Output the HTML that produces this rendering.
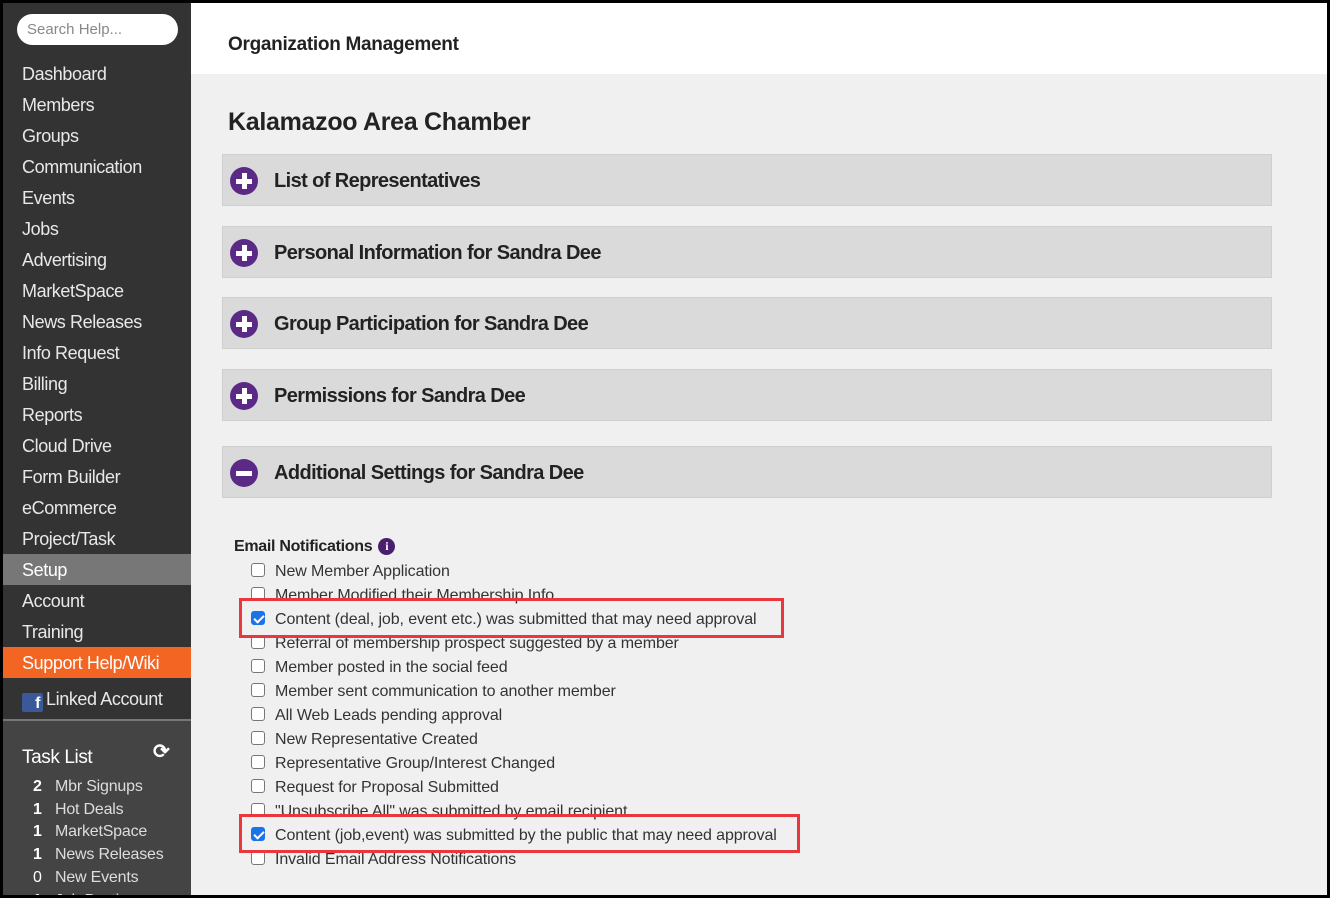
<!DOCTYPE html>
<html><head><meta charset="utf-8"><style>
*{margin:0;padding:0;box-sizing:border-box}
body{width:1330px;height:898px;background:#000;font-family:"Liberation Sans",Arial,sans-serif;position:relative;overflow:hidden}
#frame{position:absolute;left:3px;top:3px;width:1324px;height:892px;background:#f0f0f0;overflow:hidden}
#side{position:absolute;left:0;top:0;width:188px;height:892px;background:#333}
#search{position:absolute;left:14px;top:11px;width:161px;height:31px;background:#fff;border-radius:16px;color:#888;font-size:15px;padding:7px 10px}
.nav{position:absolute;left:0;width:188px;height:31px;color:#e8e8e8;font-size:18px;letter-spacing:-0.4px;padding-left:19px;line-height:33px}
#task{position:absolute;left:0;top:716px;width:188px;height:176px;background:#444;border-top:2px solid #777}
.t{position:absolute;left:30px;font-size:16px;color:#ddd;letter-spacing:-0.2px}
.t b{display:inline-block;width:22px;color:#fff}
#hdr{position:absolute;left:188px;top:0;width:1136px;height:71px;background:#fff}
#hdr span{position:absolute;left:37px;top:31px;font-size:19px;font-weight:bold;color:#222;letter-spacing:-0.3px}
h1{position:absolute;left:225px;top:105px;font-size:25px;color:#222;font-weight:bold;letter-spacing:-0.3px}
.p{position:absolute;left:219px;width:1050px;height:52px;background:#dadada;border:1px solid #cfcfcf}
.p .ic{position:absolute;left:7px;top:12px;width:28px;height:28px;border-radius:50%;background:#5b2a86}
.p .ic:before{content:"";position:absolute;left:6px;top:11.5px;width:16px;height:5px;background:#fff}
.p .ic.plus:after{content:"";position:absolute;left:11.5px;top:6px;width:5px;height:16px;background:#fff}
.p span{position:absolute;left:51px;top:15px;font-size:20px;font-weight:bold;color:#222;letter-spacing:-0.6px}
.en{position:absolute;left:231px;top:535px;font-size:16px;font-weight:bold;color:#222;letter-spacing:-0.3px}
.info{display:inline-block;width:17px;height:17px;border-radius:50%;background:#4a1f6e;color:#fff;font-size:12px;text-align:center;line-height:17px;margin-left:6px;vertical-align:1px;font-family:"Liberation Serif",serif}
.r{position:absolute;left:248px;font-size:16px;color:#333;height:20px;line-height:20px;letter-spacing:-0.1px}
.cb{display:inline-block;width:14px;height:14px;border:1px solid #777;border-radius:3px;background:#fff;vertical-align:-1px;margin-right:10px}
.cb.on{background:#1a73e8;border-color:#1a73e8;position:relative}
.cb.on:after{content:"";position:absolute;left:4px;top:1px;width:4px;height:8px;border:solid #fff;border-width:0 2px 2px 0;transform:rotate(45deg)}
.red{position:absolute;border:3px solid #e8383d}
</style></head><body><div id="frame">
<div id="side">
<div id="search">Search Help...</div>
<div class="nav" style="top:55px">Dashboard</div>
<div class="nav" style="top:86px">Members</div>
<div class="nav" style="top:117px">Groups</div>
<div class="nav" style="top:148px">Communication</div>
<div class="nav" style="top:179px">Events</div>
<div class="nav" style="top:210px">Jobs</div>
<div class="nav" style="top:241px">Advertising</div>
<div class="nav" style="top:272px">MarketSpace</div>
<div class="nav" style="top:303px">News Releases</div>
<div class="nav" style="top:334px">Info Request</div>
<div class="nav" style="top:365px">Billing</div>
<div class="nav" style="top:396px">Reports</div>
<div class="nav" style="top:427px">Cloud Drive</div>
<div class="nav" style="top:458px">Form Builder</div>
<div class="nav" style="top:489px">eCommerce</div>
<div class="nav" style="top:520px">Project/Task</div>
<div class="nav" style="top:551px;background:#777;color:#fff">Setup</div>
<div class="nav" style="top:582px">Account</div>
<div class="nav" style="top:613px">Training</div>
<div class="nav" style="top:644px;background:#f26522;color:#fff">Support Help/Wiki</div>
<div class="nav" style="top:680px"><span style="display:inline-block;width:21px;height:19px;background:#3b5998;border-radius:2px;color:#fff;font-weight:bold;font-size:16px;text-align:right;padding-right:3px;line-height:22px;vertical-align:-3px;margin-right:3px">f</span>Linked Account</div>
<div id="task">
<div style="position:absolute;left:19px;top:26px;font-size:19px;color:#fff;letter-spacing:-0.4px">Task List</div>
<div style="position:absolute;left:150px;top:18px;font-size:20px;color:#fff;font-weight:bold">⟳</div>
<div class="t" style="top:57px"><b>2</b>Mbr Signups</div>
<div class="t" style="top:80px"><b>1</b>Hot Deals</div>
<div class="t" style="top:102px"><b>1</b>MarketSpace</div>
<div class="t" style="top:125px"><b>1</b>News Releases</div>
<div class="t" style="top:148px"><b style="font-weight:normal">0</b>New Events</div>
<div class="t" style="top:171px"><b>1</b>Job Postings</div>
</div>
</div>
<div id="hdr"><span>Organization Management</span></div>
<h1>Kalamazoo Area Chamber</h1>
<div class="p" style="top:151px"><div class="ic plus"></div><span>List of Representatives</span></div>
<div class="p" style="top:223px"><div class="ic plus"></div><span>Personal Information for Sandra Dee</span></div>
<div class="p" style="top:294px"><div class="ic plus"></div><span>Group Participation for Sandra Dee</span></div>
<div class="p" style="top:366px"><div class="ic plus"></div><span>Permissions for Sandra Dee</span></div>
<div class="p" style="top:443px"><div class="ic"></div><span>Additional Settings for Sandra Dee</span></div>
<div class="en">Email Notifications<span class="info">i</span></div>
<div class="r" style="top:559px"><span class="cb"></span>New Member Application</div>
<div class="r" style="top:583px"><span class="cb"></span>Member Modified their Membership Info</div>
<div class="r" style="top:607px"><span class="cb on"></span>Content (deal, job, event etc.) was submitted that may need approval</div>
<div class="r" style="top:631px"><span class="cb"></span>Referral of membership prospect suggested by a member</div>
<div class="r" style="top:655px"><span class="cb"></span>Member posted in the social feed</div>
<div class="r" style="top:679px"><span class="cb"></span>Member sent communication to another member</div>
<div class="r" style="top:703px"><span class="cb"></span>All Web Leads pending approval</div>
<div class="r" style="top:727px"><span class="cb"></span>New Representative Created</div>
<div class="r" style="top:751px"><span class="cb"></span>Representative Group/Interest Changed</div>
<div class="r" style="top:775px"><span class="cb"></span>Request for Proposal Submitted</div>
<div class="r" style="top:799px"><span class="cb"></span>"Unsubscribe All" was submitted by email recipient</div>
<div class="r" style="top:823px"><span class="cb on"></span>Content (job,event) was submitted by the public that may need approval</div>
<div class="r" style="top:847px"><span class="cb"></span>Invalid Email Address Notifications</div>
<div class="red" style="left:236px;top:595px;width:545px;height:40px"></div>
<div class="red" style="left:236px;top:811px;width:561px;height:39px"></div>
</div></body></html>
